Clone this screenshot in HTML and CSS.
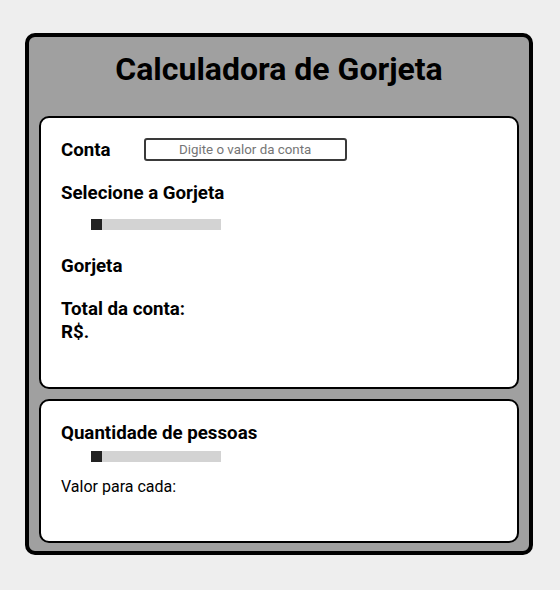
FILE: index.html
```html
<!DOCTYPE html>
<html lang="pt-BR">
<head>
<meta charset="utf-8">
<title>Calculadora de Gorjeta</title>
<link rel="stylesheet" href="styles.css">
</head>
<body>
<main class="calc">
  <h1 class="title">Calculadora de Gorjeta</h1>
  <section class="card card-main">
    <div class="row-conta">
      <h3 class="label">Conta</h3>
      <input class="bill" type="text" placeholder="Digite o valor da conta">
    </div>
    <h3 class="label sel">Selecione a Gorjeta</h3>
    <input class="range range-tip" type="range" min="0" max="100" value="0">
    <h3 class="label tip">Gorjeta</h3>
    <h3 class="label total">Total da conta:<br>R$.</h3>
  </section>
  <section class="card card-people">
    <h3 class="label">Quantidade de pessoas</h3>
    <input class="range range-people" type="range" min="0" max="100" value="0">
    <p class="each">Valor para cada:</p>
  </section>
</main>
</body>
</html>
```
FILE: styles.css
```css
* { box-sizing: border-box; }
body {
  margin: 0;
  background: #eeeeee;
  font-family: Roboto, "Liberation Sans", sans-serif;
  color: #000;
}
.calc {
  width: 508px;
  margin: 33px 0 0 25px;
  background: #a0a0a0;
  border: 4px solid #000;
  border-radius: 10px;
  padding: 12px 10px 8px;
}
.title {
  margin: 0;
  font-size: 32px;
  line-height: 40px;
  font-weight: 700;
  text-align: center;
}
.card {
  background: #fff;
  border: 2px solid #000;
  border-radius: 10px;
  padding: 20px 20px 0;
  display: flex;
  flex-direction: column;
  align-items: flex-start;
}
.card-main { margin-top: 27px; height: 273px; }
.card-people { margin-top: 10px; height: 144px; padding-top: 21px; }
.label {
  margin: 0;
  font-size: 18.72px;
  line-height: 22px;
  font-weight: 700;
}
.row-conta {
  display: flex;
  align-items: center;
  height: 23px;
}
.bill {
  margin-left: 33px;
  width: 203px;
  height: 23px;
  border: 2px solid #3a3a3a;
  border-radius: 3px;
  padding: 0 4px;
  font-family: Roboto, "Liberation Sans", sans-serif;
  font-size: 13.33px;
  text-align: center;
  outline: none;
}
.bill::placeholder { color: #757575; }
.sel { margin-top: 21px; }
.range {
  -webkit-appearance: none;
  appearance: none;
  width: 130px;
  height: 11px;
  margin: 15px 0 0 30px;
  background: #d3d3d3;
  border-radius: 0;
  outline: none;
}
.range::-webkit-slider-thumb {
  -webkit-appearance: none;
  appearance: none;
  width: 11px;
  height: 11px;
  background: #222;
  border: none;
  border-radius: 0;
}
.range-people { margin-top: 7px; }
.tip { margin-top: 25px; }
.total { margin-top: 21px; line-height: 23px; }
.each {
  margin: 15px 0 0;
  font-size: 16px;
  line-height: 19px;
}
```
